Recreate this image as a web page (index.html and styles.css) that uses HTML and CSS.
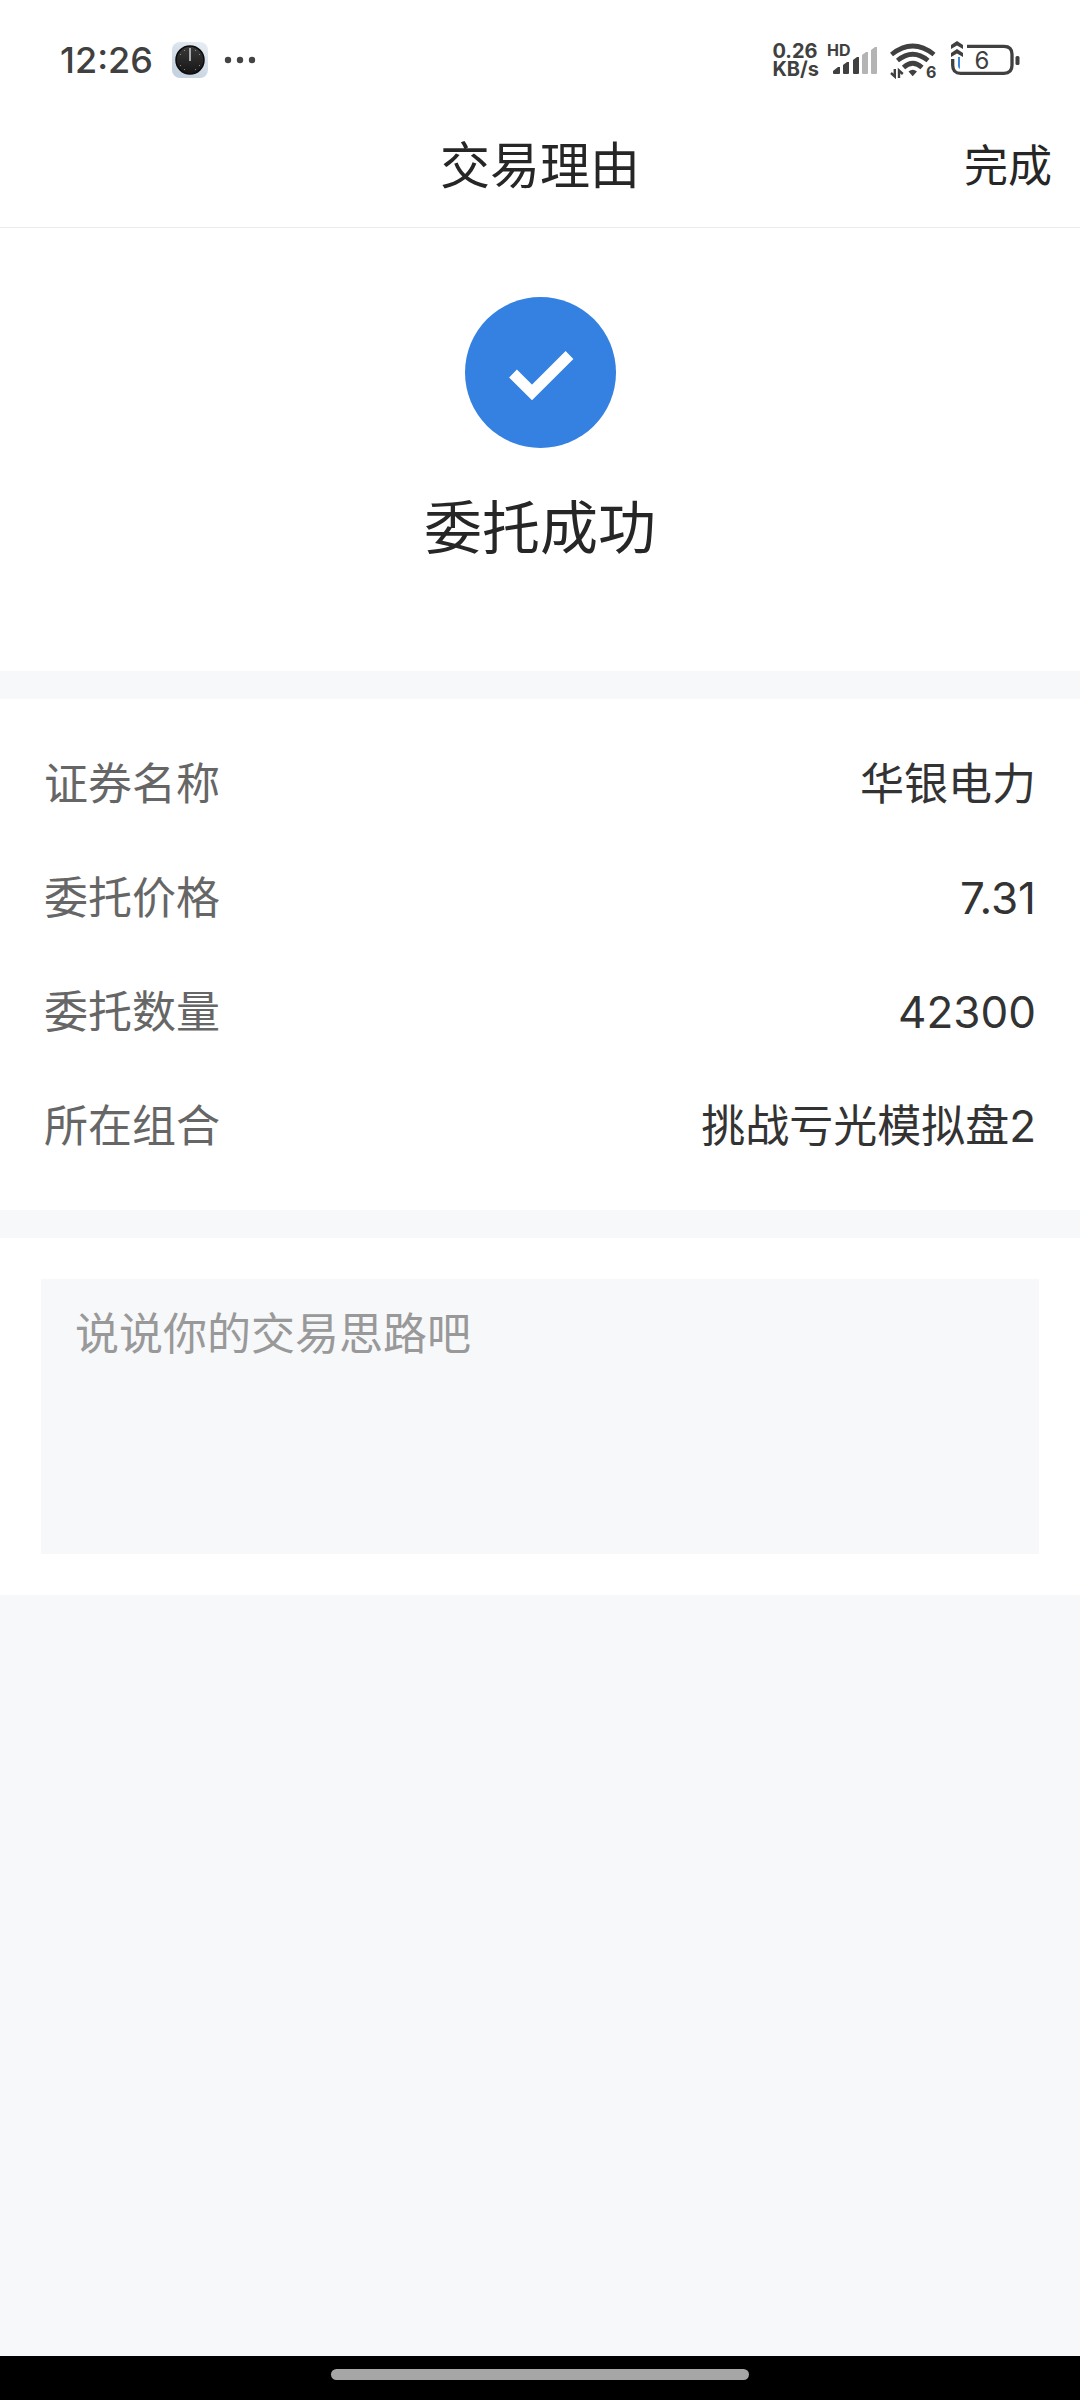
FILE: index.html
```html
<!DOCTYPE html>
<html lang="zh-CN">

<head>
    <meta charset="UTF-8">
    <meta name="viewport" content="width=device-width, initial-scale=1.0">
    <title>交易理由</title>
    <link rel="stylesheet" href="styles.css">
</head>

<body>
    <div class="status-bar">
        <div class="status-left">
            <span class="time">12:26</span>
            <svg class="icon" width="36" height="36" viewBox="0 0 36 36">
                <defs>
                    <linearGradient id="tile" x1="1" y1="0" x2="0.5" y2="1">
                        <stop offset="0" stop-color="#e9eef4" />
                        <stop offset="1" stop-color="#c6d2e0" />
                    </linearGradient>
                    <linearGradient id="dial" x1="0" y1="0" x2="0" y2="1">
                        <stop offset="0" stop-color="#3a3a3a" />
                        <stop offset="1" stop-color="#151515" />
                    </linearGradient>
                </defs>
                <rect width="36" height="36" rx="8" fill="url(#tile)" />
                <circle cx="18" cy="18" r="14" fill="url(#dial)" stroke="#0c0c0c" stroke-width="1.5" />
                <g fill="#999">
                    <circle cx="12.5" cy="8.5" r=".6" />
                    <circle cx="23.5" cy="8.5" r=".6" />
                    <circle cx="8.5" cy="12.5" r=".6" />
                    <circle cx="27.5" cy="12.5" r=".6" />
                    <circle cx="8.5" cy="23.5" r=".6" />
                    <circle cx="27.5" cy="23.5" r=".6" />
                    <circle cx="12.5" cy="27.5" r=".6" />
                    <circle cx="23.5" cy="27.5" r=".6" />
                </g>
                <path d="M18 6v13" stroke="#aaa" stroke-width="2" />
            </svg>
            <svg class="icon" width="32" height="8" viewBox="0 0 32 8" fill="#444">
                <circle cx="4" cy="4" r="3.2" />
                <circle cx="16" cy="4" r="3.2" />
                <circle cx="28" cy="4" r="3.2" />
            </svg>
        </div>
        <div class="status-right">
            <div class="speed">
                <span>0.26</span>
                <span>KB/s</span>
            </div>
            <svg class="icon" width="55" height="38" viewBox="0 -1 55 38">
                <text class="badge" x="0" y="14">HD</text>
                <g fill="#404040">
                    <path d="M6 31v-2l5-4h2v6q0 1-1 1H7q-1 0-1-1z" />
                    <path d="M16 23l4-3h2v11q0 1-1 1h-4q-1 0-1-1z" />
                    <path d="M26 18l4-3h2v16q0 1-1 1h-4q-1 0-1-1z" />
                </g>
                <g fill="#b4b4b4">
                    <path d="M35 13l4-3h2v21q0 1-1 1h-4q-1 0-1-1z" />
                    <path d="M44 8l4-3h2v26q0 1-1 1h-4q-1 0-1-1z" />
                </g>
            </svg>
            <svg class="icon" width="52" height="38" viewBox="0 -1 52 38">
                <g fill="none" stroke="#404040" stroke-width="4.7">
                    <path d="M1.500 12.500Q22.700-4.500 44 12.500" />
                    <path d="M7.500 18.500Q22.700 6 38 18.500" />
                    <path d="M13.500 25.500Q22.700 17 32 25.500" />
                </g>
                <path d="M18.500 29.500q4.200-3.500 8.500 0l-4.300 4.800z" fill="#404040" />
                <path d="M4.800 27v7.500L1 31M9 36v-7.500l3.800 3.500" fill="none" stroke="#404040" stroke-width="2.400" />
                <text class="badge" x="36" y="36">6</text>
            </svg>
            <svg class="icon" width="70" height="38" viewBox="0 -1 70 38">
                <path d="M17 4.300h37q8 0 8 8v11q0 8-8 8H10.700q-8 0-8-8V17" fill="none" stroke="#404040" stroke-width="3.300" />
                <rect x="65.500" y="14" width="4" height="9" rx="1.500" fill="#404040" />
                <path d="M1 3l6-4 6 4v4L7 3.500 1 7zM1 11l6-4 6 4v4l-6-3.500L1 15z" fill="#404040" />
                <path d="M10 15v12q-2-1-2-3v-9z" fill="#3b87dd" />
                <text class="battery-level" x="32" y="27" text-anchor="middle">6</text>
            </svg>
        </div>
    </div>

    <header class="header">
        <h1>交易理由</h1>
        <button type="button" class="done">完成</button>
    </header>

    <main>
        <section class="success">
            <svg class="icon" width="151" height="151" viewBox="0 0 151 151">
                <circle cx="75.500" cy="75.500" r="75.500" fill="#3481e2" />
                <path d="M48 76.500L67 95.500L104.500 58" fill="none" stroke="#fff" stroke-width="11" />
            </svg>
            <h2>委托成功</h2>
        </section>

        <dl class="details">
            <div class="row">
                <dt>证券名称</dt>
                <dd>华银电力</dd>
            </div>
            <div class="row">
                <dt>委托价格</dt>
                <dd>7.31</dd>
            </div>
            <div class="row">
                <dt>委托数量</dt>
                <dd>42300</dd>
            </div>
            <div class="row">
                <dt>所在组合</dt>
                <dd>挑战亏光模拟盘2</dd>
            </div>
        </dl>

        <section class="reason">
            <textarea aria-label="交易理由" placeholder="说说你的交易思路吧"></textarea>
        </section>
    </main>

    <div class="nav-bar">
        <div class="nav-pill"></div>
    </div>
</body>

</html>
```
FILE: styles.css
```css
* {
    box-sizing: border-box;
}

body {
    margin: 0;
    min-height: 100vh;
    display: flex;
    flex-direction: column;
    background-color: #f7f8fa;
    color: #262626;
    font-family: Inter, "Noto Sans CJK SC", sans-serif;
}

h1,
h2,
dl,
dd {
    margin: 0;
    font-weight: 400;
}

.icon {
    display: block;
    flex: none;
}

/* status bar */
.status-bar {
    display: flex;
    justify-content: space-between;
    align-items: center;
    height: 102px;
    padding: 18px 60px 0;
    background: #fff;
    color: #404040;
}

.status-left {
    display: flex;
    align-items: center;
    gap: 16px;
}

.time {
    width: 96px;
    font-size: 36px;
    font-weight: 500;
}

.status-right {
    display: flex;
    align-items: center;
    gap: 8px;
}

.speed {
    display: flex;
    flex-direction: column;
    font-size: 20px;
    font-weight: 700;
    line-height: 18px;
}

.badge {
    font-size: 16px;
    font-weight: 700;
    fill: #404040;
}

.battery-level {
    font-size: 24px;
    fill: #404040;
}

/* title bar */
.header {
    display: grid;
    grid-template-columns: 1fr auto 1fr;
    align-items: center;
    height: 126px;
    padding: 2px 28px 0;
    background: #fff;
    border-bottom: 1px solid #ebebeb;
}

.header h1 {
    grid-column: 2;
    font-size: 50px;
    line-height: 72px;
}

.done {
    justify-self: end;
    padding: 0;
    border: none;
    background: none;
    color: inherit;
    font: inherit;
    font-size: 44px;
    line-height: 72px;
    cursor: pointer;
}

/* order result */
.success {
    display: flex;
    flex-direction: column;
    align-items: center;
    padding: 69px 0 103px;
    background: #fff;
}

.success h2 {
    margin-top: 40px;
    font-size: 58px;
    line-height: 80px;
}

.details {
    margin: 28px 0;
    padding: 28px 44px 27px;
    background: #fff;
    font-size: 44px;
}

.row {
    display: flex;
    justify-content: space-between;
    line-height: 114px;
}

.row dt {
    color: #666;
}

.row dd {
    color: #333;
}

/* reason box */
.reason {
    padding: 41px;
    background: #fff;
}

.reason textarea {
    display: block;
    width: 100%;
    height: 275px;
    padding: 25px 34px;
    border: none;
    outline: none;
    resize: none;
    background: #f7f8fa;
    color: #333;
    font: inherit;
    font-size: 44px;
    line-height: 60px;
}

.reason textarea::placeholder {
    color: #999;
}

/* gesture bar */
.nav-bar {
    display: flex;
    justify-content: center;
    align-items: center;
    height: 44px;
    margin-top: auto;
    padding-bottom: 7px;
    background: #000;
}

.nav-pill {
    width: 418px;
    height: 11px;
    border-radius: 6px;
    background: #a6a6a6;
}
```
